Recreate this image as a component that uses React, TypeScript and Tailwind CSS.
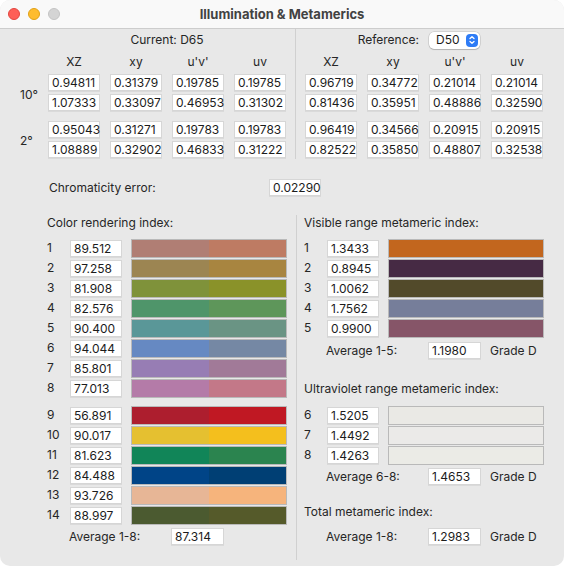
import React from "react";

function Field({ v, w = "w-[52px]" }: { v: string; w?: string }) {
  return (
    <div
      className={`${w} h-[17px] shrink-0 bg-white border border-[#d6d6d6] shadow-[0_1px_0_rgba(0,0,0,0.06)] pl-[3px] text-[12px] leading-[15px] text-[#1c1c1c]`}
    >
      {v}
    </div>
  );
}

const cri: [string, string, string, string][] = [
  ["1", "89.512", "#b07e74", "#be7b63"],
  ["2", "97.258", "#9c8552", "#a88540"],
  ["3", "81.908", "#7f923a", "#8a9229"],
  ["4", "82.576", "#4f956a", "#5e965a"],
  ["5", "90.400", "#5a9798", "#6a9484"],
  ["6", "94.044", "#6689c2", "#7588a4"],
  ["7", "85.801", "#977db4", "#a17a98"],
  ["8", "77.013", "#b47ba8", "#c37888"],
];
const cri2: [string, string, string, string][] = [
  ["9", "56.891", "#ad1e2e", "#c01823"],
  ["10", "90.017", "#e5c030", "#f4bf1d"],
  ["11", "81.623", "#118558", "#2b844f"],
  ["12", "84.488", "#004487", "#003f74"],
  ["13", "93.726", "#e7b696", "#f6b47c"],
  ["14", "88.997", "#4b5a30", "#555a2a"],
];
const vis: [string, string, string][] = [
  ["1", "1.3433", "#c2661e"],
  ["2", "0.8945", "#462a44"],
  ["3", "1.0062", "#524a2a"],
  ["4", "1.7562", "#767e9a"],
  ["5", "0.9900", "#865568"],
];
const uv: [string, string, string][] = [
  ["6", "1.5205", "#eae9e5"],
  ["7", "1.4492", "#ebeae8"],
  ["8", "1.4263", "#ebebe6"],
];

function SwatchRow({ n, v, a, b }: { n: string; v: string; a: string; b: string }) {
  return (
    <div className="flex items-center h-[20px]">
      <div className="w-[23px] leading-4">{n}</div>
      <Field v={v} />
      <div className="ml-[9px] w-[156px] h-[19px] flex border border-black/20">
        <div className="flex-1" style={{ backgroundColor: a }} />
        <div className="flex-1" style={{ backgroundColor: b }} />
      </div>
    </div>
  );
}

function AvgRow({ label, v, grade }: { label: string; v: string; grade?: string }) {
  return (
    <div className="flex items-center h-[17px] ml-[22px]">
      <div className="w-[102px] leading-4">{label}</div>
      <Field v={v} w="w-[53px]" />
      {grade && <div className="ml-[9px] leading-4">{grade}</div>}
    </div>
  );
}

function TopGrid({ rows }: { rows: [string[], string[]][] }) {
  return (
    <>
      {rows.map((r, i) => (
        <div key={i} className={`grid grid-cols-[repeat(4,52px)] gap-x-[10px] gap-y-[3px] ${i === 1 ? "mt-[10px]" : "mt-[4px]"}`}>
          {r[0].map((v) => (
            <Field key={"a" + v} v={v} />
          ))}
          {r[1].map((v) => (
            <Field key={"b" + v} v={v} />
          ))}
        </div>
      ))}
    </>
  );
}

function Headers() {
  return (
    <div className="mt-[6px] grid grid-cols-[repeat(4,52px)] gap-x-[10px] h-4 leading-4 text-center">
      <div>XZ</div>
      <div>xy</div>
      <div>u'v'</div>
      <div>uv</div>
    </div>
  );
}

export default function App() {
  return (
    <div className="w-[564px] h-[566px] bg-white">
      <div className="w-[564px] h-[566px] rounded-[10px] overflow-hidden bg-[#e8e8e8] flex flex-col font-[Inter,sans-serif] text-[12px] text-[#262626]">
        {/* title bar */}
        <div className="relative h-[29px] shrink-0 border-b border-[#cdcdcd] bg-[#f9f9f9] flex items-center justify-center">
          <div className="absolute left-[8px] top-[8px] flex gap-[8px]">
            <div className="w-[12px] h-[12px] rounded-full bg-[#fe5f57] border border-[#e2463f]" />
            <div className="w-[12px] h-[12px] rounded-full bg-[#febc2e] border border-[#e1a116]" />
            <div className="w-[12px] h-[12px] rounded-full bg-[#d4d4d4] border border-[#c4c4c4]" />
          </div>
          <div className="text-[13px] font-bold text-[#424242] leading-4">Illumination &amp; Metamerics</div>
        </div>

        {/* top section */}
        <div className="flex h-[130px] shrink-0">
          <div className="w-[295px] pt-[3px] flex">
            <div className="w-[48px] flex flex-col pl-[20px] pt-[45px]">
              <div className="h-[37px] flex items-center">10°</div>
              <div className="h-[37px] mt-[10px] flex items-center">2°</div>
            </div>
            <div>
              <div className="h-4 leading-4 text-center">Current: D65</div>
              <Headers />
              <TopGrid
                rows={[
                  [["0.94811", "0.31379", "0.19785", "0.19785"], ["1.07333", "0.33097", "0.46953", "0.31302"]],
                  [["0.95043", "0.31271", "0.19783", "0.19783"], ["1.08889", "0.32902", "0.46833", "0.31222"]],
                ]}
              />
            </div>
          </div>
          <div className="w-px bg-[#d0d0d0]" />
          <div className="pl-[9px] pt-[3px]">
            <div className="h-4 flex items-center w-[238px]">
              <div className="w-[115px] pr-[1px] text-right leading-4">Reference:</div>
              <div className="ml-[9px] w-[51px] h-[17px] rounded-[5px] bg-white shadow-[0_0_0_0.5px_rgba(0,0,0,0.18),0_1px_1px_rgba(0,0,0,0.15)] flex items-center justify-between pl-[7px] pr-[2px]">
                <span className="text-[12px] leading-4 text-[#1c1c1c]">D50</span>
                <div className="w-[12px] h-[13px] rounded-[4px] bg-[#2e7cf6] flex items-center justify-center">
                  <svg width="8" height="10" viewBox="0 0 8 10" fill="none">
                    <path d="M2 3.6 L4 1.8 L6 3.6" stroke="white" strokeWidth="1.3" strokeLinecap="round" strokeLinejoin="round" />
                    <path d="M2 6.4 L4 8.2 L6 6.4" stroke="white" strokeWidth="1.3" strokeLinecap="round" strokeLinejoin="round" />
                  </svg>
                </div>
              </div>
            </div>
            <Headers />
            <TopGrid
              rows={[
                [["0.96719", "0.34772", "0.21014", "0.21014"], ["0.81436", "0.35951", "0.48886", "0.32590"]],
                [["0.96419", "0.34566", "0.20915", "0.20915"], ["0.82522", "0.35850", "0.48807", "0.32538"]],
              ]}
            />
          </div>
        </div>

        {/* chromaticity error */}
        <div className="mt-[20px] h-[17px] flex items-center pl-[49px]">
          <div className="w-[220px] leading-4">Chromaticity error:</div>
          <Field v="0.02290" />
        </div>

        {/* bottom section */}
        <div className="mt-[19px] flex h-[345px]">
          <div className="w-[296px] pl-[47px]">
            <div className="h-4 leading-4">Color rendering index:</div>
            <div className="mt-[7px]">
              {cri.map(([n, v, a, b]) => (
                <SwatchRow key={n} n={n} v={v} a={a} b={b} />
              ))}
            </div>
            <div className="mt-[7px]">
              {cri2.map(([n, v, a, b]) => (
                <SwatchRow key={n} n={n} v={v} a={a} b={b} />
              ))}
            </div>
            <div className="mt-[3px]">
              <AvgRow label="Average 1-8:" v="87.314" />
            </div>
          </div>
          <div className="w-px bg-[#d0d0d0]" />
          <div className="pl-[7px]">
            <div className="h-4 leading-4">Visible range metameric index:</div>
            <div className="mt-[7px]">
              {vis.map(([n, v, c]) => (
                <SwatchRow key={n} n={n} v={v} a={c} b={c} />
              ))}
            </div>
            <div className="mt-[4px]">
              <AvgRow label="Average 1-5:" v="1.1980" grade="Grade D" />
            </div>
            <div className="mt-[22px] h-4 leading-4">Ultraviolet range metameric index:</div>
            <div className="mt-[8px]">
              {uv.map(([n, v, c]) => (
                <SwatchRow key={n} n={n} v={v} a={c} b={c} />
              ))}
            </div>
            <div className="mt-[3px]">
              <AvgRow label="Average 6-8:" v="1.4653" grade="Grade D" />
            </div>
            <div className="mt-[19px] h-4 leading-4">Total metameric index:</div>
            <div className="mt-[8px]">
              <AvgRow label="Average 1-8:" v="1.2983" grade="Grade D" />
            </div>
          </div>
        </div>
      </div>
    </div>
  );
}
